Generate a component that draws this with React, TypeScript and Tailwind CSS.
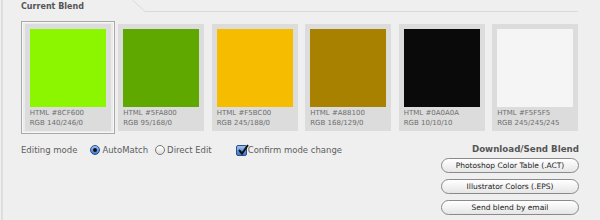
import React from "react"

const swatches = [
  { hex: "#8CF600", rgb: "140/246/0" },
  { hex: "#5FA800", rgb: "95/168/0" },
  { hex: "#F5BC00", rgb: "245/188/0" },
  { hex: "#A88100", rgb: "168/129/0" },
  { hex: "#0A0A0A", rgb: "10/10/10" },
  { hex: "#F5F5F5", rgb: "245/245/245" },
]

const font = { fontFamily: '"DejaVu Sans", Verdana, sans-serif' }

function Swatch({ hex, rgb, selected }: { hex: string; rgb: string; selected: boolean }) {
  return (
    <div
      className={
        "flex h-[113px] items-center justify-center " +
        (selected ? "border border-[#a9a9a9] bg-[#ebebeb] shadow-[inset_0_0_0_1px_#f7f7f7]" : "")
      }
    >
      <div className="h-[107px] w-[86px] bg-[#dcdcdc] px-[5px] pt-[5px]">
        <div className="h-[78px] w-[76px]" style={{ backgroundColor: hex }} />
        <div className="mt-[2px] text-[7px] leading-[9.5px] text-[#6e6e6e]">
          <div>HTML {hex}</div>
          <div>RGB {rgb}</div>
        </div>
      </div>
    </div>
  )
}

function Radio({ checked }: { checked: boolean }) {
  if (checked) {
    return (
      <span className="flex h-[10px] w-[10px] items-center justify-center rounded-full border border-[#2a4f8a] bg-gradient-to-b from-[#9cc3f0] to-[#3a78d0]">
        <span className="h-[4px] w-[4px] rounded-full bg-[#111]" />
      </span>
    )
  }
  return (
    <span className="h-[10px] w-[10px] rounded-full border border-[#777] bg-gradient-to-b from-[#fff] to-[#e0e0e0]" />
  )
}

function Button({ label }: { label: string }) {
  return (
    <button className="h-[15px] w-[138px] rounded-full border border-[#8a8a8a] bg-gradient-to-b from-[#ffffff] to-[#e6e6e6] text-[7.5px] leading-[13px] text-[#222]">
      {label}
    </button>
  )
}

export default function App() {
  return (
    <div className="h-[220px] w-[600px] overflow-hidden bg-[#efefef]" style={font}>
      <div className="ml-[1px] h-full border-l-2 border-[#dedede]">
        {/* tab header */}
        <div className="flex h-[12px] items-end">
          <div className="w-[129px] self-start pl-[18px] pt-[2px] text-[8px] font-bold leading-[10px] text-[#555]">
            Current Blend
          </div>
          <svg width="14" height="12" viewBox="0 0 14 12" className="shrink-0">
            <path d="M0.5 0 L13 11.5 L14 11.5" stroke="#dadada" strokeWidth="1" fill="none" />
          </svg>
          <div className="mr-[22px] h-[1px] flex-1 bg-[#dadada]" />
        </div>

        <div className="ml-[18px] mt-[9px] grid w-[561px] grid-cols-6">
          {swatches.map((s, i) => (
            <Swatch key={s.hex} hex={s.hex} rgb={s.rgb} selected={i === 0} />
          ))}
        </div>

        <div className="mt-[9px] flex items-start justify-between pr-[21px]">
          <div className="ml-[18px] mt-[1px] flex items-center text-[8.5px] leading-[12px] text-[#5e5e5e]">
            <span>Editing mode</span>
            <span className="ml-[13px] flex items-center gap-[2px]">
              <Radio checked />
              <span>AutoMatch</span>
            </span>
            <span className="ml-[7px] flex items-center gap-[2px]">
              <Radio checked={false} />
              <span>Direct Edit</span>
            </span>
            <span className="ml-[24px] flex items-center gap-[1px]">
              <span className="relative h-[11px] w-[11px] rounded-[2px] border border-[#2a4f8a] bg-gradient-to-b from-[#9cc3f0] to-[#3a78d0]">
                <svg viewBox="0 0 12 12" className="absolute -top-[2px] left-0 h-[12px] w-[12px]">
                  <path d="M2 6 L5 9.5 L11 1" stroke="#111" strokeWidth="2" fill="none" />
                </svg>
              </span>
              <span>Confirm mode change</span>
            </span>
          </div>

          <div className="flex flex-col items-end">
            <div className="text-[8.7px] font-bold leading-[12px] text-[#555]">Download/Send Blend</div>
            <div className="mt-[3px] flex flex-col gap-[6px]">
              <Button label="Photoshop Color Table (.ACT)" />
              <Button label="Illustrator Colors (.EPS)" />
              <Button label="Send blend by email" />
            </div>
          </div>
        </div>
      </div>
    </div>
  )
}
